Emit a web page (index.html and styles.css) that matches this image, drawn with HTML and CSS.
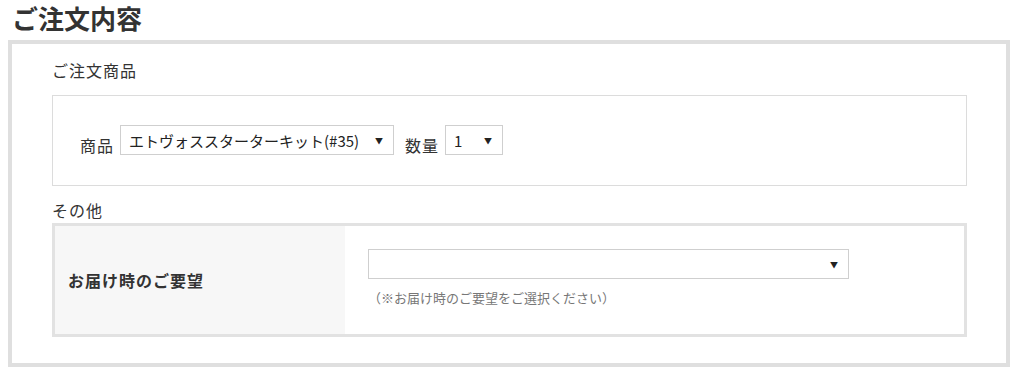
FILE: index.html
```html
<!DOCTYPE html>
<html lang="ja">
<head>
  <meta charset="UTF-8">
  <title>ご注文内容</title>
  <link rel="stylesheet" href="styles.css">
</head>
<body>

  <!-- TITLE -->
  <h2 class="page-title">ご注文内容</h2>

  <!-- ORDER BOX -->
  <div class="order-box">
    <div class="section-label">ご注文商品</div>

    <div class="item-box">
      <span class="field-label">商品</span>
      <div class="select select-item">
        <span>エトヴォススターターキット(#35)</span>
        <span class="arrow">▼</span>
      </div>
      <span class="field-label">数量</span>
      <div class="select select-qty">
        <span>1</span>
        <span class="arrow">▼</span>
      </div>
    </div>

    <div class="section-label section-other">その他</div>

    <div class="other-box">
      <div class="other-head">お届け時のご要望</div>
      <div class="other-body">
        <div class="select select-full">
          <span></span>
          <span class="arrow">▼</span>
        </div>
        <p class="note">（※お届け時のご要望をご選択ください）</p>
      </div>
    </div>
  </div>

</body>
</html>
```

FILE: styles.css
```css
* {
  box-sizing: border-box;
}

body {
  margin: 0;
  padding: 0 14px 0 8px;
  font-family: "Noto Sans CJK JP", "Noto Sans", sans-serif;
  color: #333;
  background: #fff;
}

/* TITLE */
.page-title {
  margin: 0;
  height: 40px;
  padding: 3px 0 0 4px;
  font-size: 26px;
  font-weight: bold;
  line-height: 30px;
  color: #333;
}

/* ORDER BOX */
.order-box {
  border: 4px solid #dfdfdf;
  padding: 14px 39px 26px 40px;
}

.section-label {
  font-size: 16px;
  line-height: 24px;
  letter-spacing: 1px;
  margin-bottom: 13px;
}

.section-other {
  margin-bottom: 1px;
}

.item-box {
  border: 1px solid #dcdcdc;
  height: 91px;
  padding: 0 0 30px 27px;
  display: flex;
  align-items: flex-end;
  margin-bottom: 12px;
}

.field-label {
  font-size: 16px;
  line-height: 20px;
  letter-spacing: 1px;
  margin-right: 6px;
}

.select {
  display: flex;
  align-items: center;
  justify-content: space-between;
  height: 30px;
  border: 1px solid #cfcfcf;
  background: #fff;
  font-size: 15px;
  color: #222;
  padding: 0 10px 0 8px;
}

.select .arrow {
  font-size: 8px;
  color: #222;
}

.select-item {
  width: 274px;
  margin-right: 11px;
}

.select-qty {
  width: 58px;
}

.select-full {
  width: 481px;
}

/* OTHER BOX */
.other-box {
  display: flex;
  border: 3px solid #e2e2e2;
  height: 114px;
}

.other-head {
  width: 290px;
  background: #f7f7f7;
  display: flex;
  align-items: center;
  padding-left: 13px;
  font-size: 16px;
  font-weight: bold;
  letter-spacing: 1px;
}

.other-body {
  padding: 23px 0 0 23px;
}

.note {
  margin: 9px 0 0;
  font-size: 13px;
  color: #777;
}
```
